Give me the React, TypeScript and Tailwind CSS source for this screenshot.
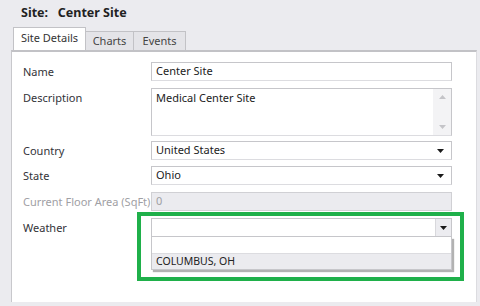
import React from "react";

const font = { fontFamily: '"Noto Sans", "Liberation Sans", sans-serif' };

function Caret() {
  return (
    <svg width="7" height="4" viewBox="0 0 7 4">
      <path d="M0 0 H7 L3.5 4 Z" fill="#1a1a1a" />
    </svg>
  );
}

function FieldRow({
  label,
  children,
  muted,
  top,
  mt,
}: {
  label: string;
  children: React.ReactNode;
  muted?: boolean;
  top?: boolean;
  mt: string;
}) {
  return (
    <div className={`flex ${top ? "items-start" : "items-center"} ${mt}`}>
      <div
        className={`w-[128px] shrink-0 whitespace-nowrap text-[11px] leading-[19px] ${
          muted ? "text-[#a0a0a4]" : "text-[#333338]"
        }`}
      >
        {label}
      </div>
      <div className="flex-1">{children}</div>
    </div>
  );
}

function SelectBox({ value }: { value: string }) {
  return (
    <div className="flex h-[19px] items-center justify-between border border-[#c6c6ca] border-b-[#dcdce0] bg-white pl-[4px] pr-[7px] text-[11px] text-[#222]">
      <span>{value}</span>
      <Caret />
    </div>
  );
}

export default function App() {
  return (
    <div className="h-[306px] w-[480px] overflow-hidden bg-[#ebebef]" style={font}>
      <div className="px-[21px] pt-[4px] text-[12.5px] font-bold leading-[18px] text-[#222]">
        Site:&nbsp;&nbsp; Center Site
      </div>

      <div className="mt-[5px] flex h-[23px] items-end pl-[13px]">
        <div className="flex h-[23px] w-[73px] items-center justify-center border border-b-0 border-[#c2c2c6] bg-white pb-[2px] text-[11px] text-[#333]">
          Site Details
        </div>
        <div className="flex h-[19px] w-[48px] items-center justify-center border border-b-0 border-l-0 border-[#c2c2c6] bg-[#e4e4e8] text-[11px] text-[#444]">
          Charts
        </div>
        <div className="flex h-[19px] w-[52px] items-center justify-center border border-b-0 border-l-0 border-[#c2c2c6] bg-[#e4e4e8] text-[11px] text-[#444]">
          Events
        </div>
      </div>

      <div className="relative ml-[11px] mr-[3px] h-[252px] border-l border-r border-t-2 border-r-[#dcdce0] border-l-[#c8c8cc] border-t-[#c2c2c6] bg-white pl-[11px] pr-[24px]">
        <FieldRow label="Name" mt="mt-[10px]">
          <div className="flex h-[19px] items-center border border-[#c6c6ca] border-b-[#dcdce0] pl-[4px] text-[11px] text-[#222]">
            Center Site
          </div>
        </FieldRow>

        <FieldRow label="Description" top mt="mt-[7px]">
          <div className="flex h-[48px] border border-[#c6c6ca] border-b-[#dcdce0]">
            <div className="flex-1 pl-[4px] text-[11px] leading-[17px] text-[#222]">
              Medical Center Site
            </div>
            <div className="flex w-[18px] flex-col items-center justify-between bg-[#f3f3f5] py-[6px]">
              <svg width="7" height="4" viewBox="0 0 7 4">
                <path d="M0 4 L3.5 0 L7 4 Z" fill="#c4c4c8" />
              </svg>
              <svg width="7" height="4" viewBox="0 0 7 4">
                <path d="M0 0 H7 L3.5 4 Z" fill="#c4c4c8" />
              </svg>
            </div>
          </div>
        </FieldRow>

        <FieldRow label="Country" mt="mt-[5px]">
          <SelectBox value="United States" />
        </FieldRow>

        <FieldRow label="State" mt="mt-[6px]">
          <SelectBox value="Ohio" />
        </FieldRow>

        <FieldRow label="Current Floor Area (SqFt)" muted mt="mt-[7px]">
          <div className="flex h-[19px] items-center border border-[#d0d0d4] bg-[#ebebef] pl-[4px] text-[11px] text-[#a0a0a4]">
            0
          </div>
        </FieldRow>

        <FieldRow label="Weather" mt="mt-[7px]">
          <div className="flex h-[19px] border border-[#c6c6ca] bg-white">
            <div className="flex-1" />
            <div className="flex w-[16px] items-center justify-center border-l border-[#d8d8dc] bg-[#ececf0]">
              <Caret />
            </div>
          </div>
        </FieldRow>

        {/* open dropdown list */}
        <div className="absolute left-[139px] top-[185px] w-[301px] border border-t-0 border-[#c6c6ca] bg-white shadow-[2px_2px_1px_rgba(0,0,0,0.3)]">
          <div className="h-[16px]" />
          <div className="flex h-[16px] items-center border-t border-[#dcdce0] bg-[#ebebef] pl-[4px] text-[10.5px] text-[#222]">
            COLUMBUS, OH
          </div>
        </div>

        {/* highlight frame */}
        <div className="absolute left-[125px] top-[160px] h-[69px] w-[327px] border-[4px] border-[#1fb04a]" />
      </div>
    </div>
  );
}
